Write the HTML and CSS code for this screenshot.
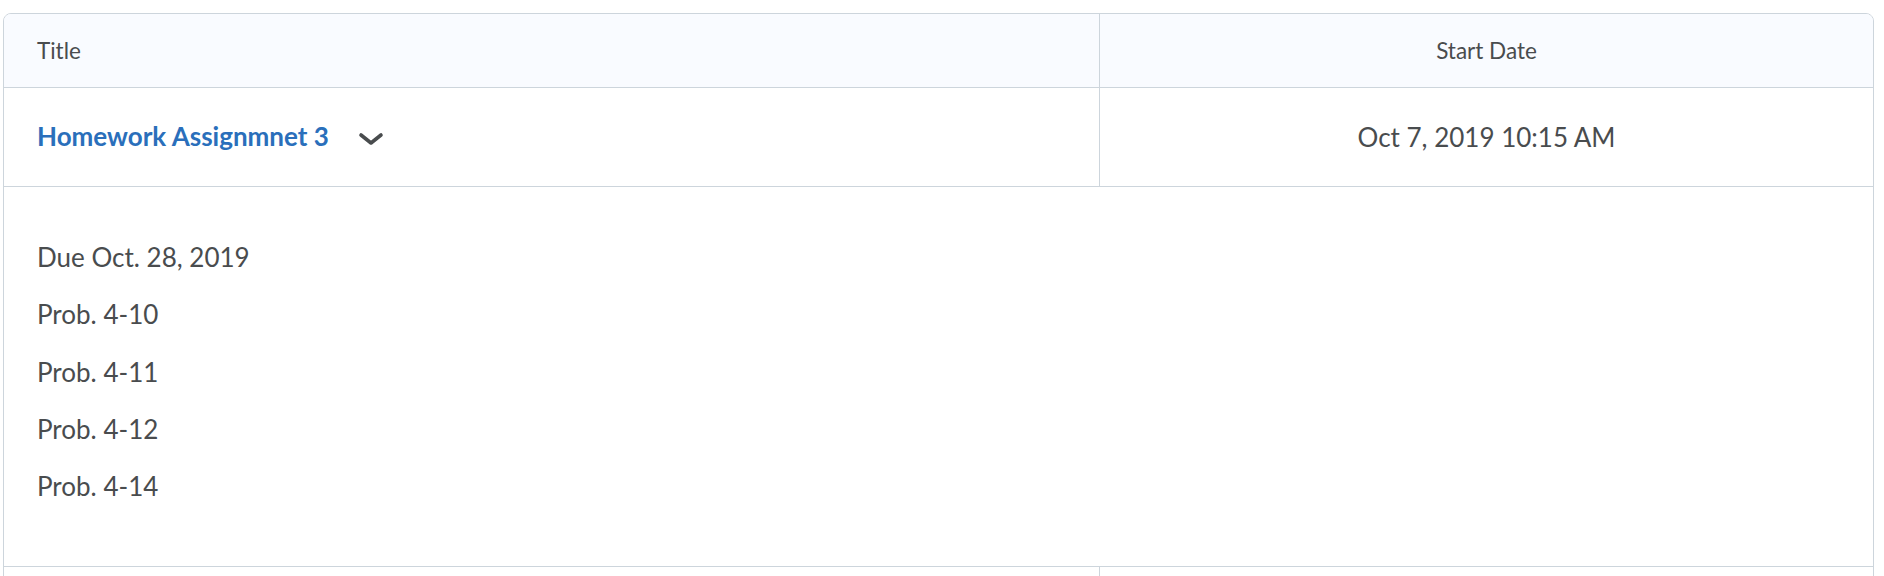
FILE: index.html
```html
<!DOCTYPE html>
<html lang="en">
<head>
<meta charset="utf-8">
<title>Assignments</title>
<link rel="stylesheet" href="styles.css">
</head>
<body>
<div class="page">
  <div class="table">
    <div class="cell head head-title">Title</div>
    <div class="cell head head-date">Start Date</div>

    <div class="cell row-title">
      <a class="link" href="#">Homework Assignmnet 3</a>
      <span class="chev">
        <svg width="26" height="14" viewBox="0 0 26 14" aria-hidden="true">
          <polyline points="3,3 13,11 23,3" fill="none" stroke="#494c4e" stroke-width="3.6" stroke-linecap="round" stroke-linejoin="round"/>
        </svg>
      </span>
    </div>
    <div class="cell row-date">Oct 7, 2019 10:15 AM</div>

    <div class="cell details">
      <p class="line">Due Oct. 28, 2019</p>
      <p class="line">Prob. 4-10</p>
      <p class="line">Prob. 4-11</p>
      <p class="line">Prob. 4-12</p>
      <p class="line">Prob. 4-14</p>
    </div>

    <div class="cell next-title"></div>
    <div class="cell next-date"></div>
  </div>
</div>
</body>
</html>
```

FILE: styles.css
```css
html, body {
  margin: 0;
  padding: 0;
  background: #ffffff;
}

body {
  font-family: Lato, "Open Sans", "Liberation Sans", sans-serif;
  color: #494c4e;
}

.page {
  padding: 13px 0 0 3px;
}

.table {
  width: 1871px;
  box-sizing: border-box;
  border: 1px solid #cdd5dc;
  border-radius: 8px;
  overflow: hidden;
  display: grid;
  grid-template-columns: 1096px 1fr;
}

.cell {
  box-sizing: border-box;
  border-bottom: 1px solid #cdd5dc;
  display: flex;
  align-items: center;
}

.head {
  height: 74px;
  background: #f9fbff;
  font-size: 22.5px;
}

.head-title {
  padding-left: 33px;
  border-right: 1px solid #cdd5dc;
}

.head-date {
  justify-content: center;
}

.row-title,
.row-date {
  height: 99px;
}

.row-title {
  padding-left: 33px;
  padding-bottom: 3px;
  border-right: 1px solid #cdd5dc;
}

.row-date {
  justify-content: center;
  font-size: 26px;
  padding-bottom: 1px;
}

.link {
  font-size: 26px;
  font-weight: 700;
  color: #2a6fbb;
  text-decoration: none;
}

.chev {
  display: flex;
  margin-left: 29px;
  margin-top: 6px;
}

.details {
  grid-column: 1 / span 2;
  height: 380px;
  flex-direction: column;
  align-items: flex-start;
  justify-content: flex-start;
  gap: 25.3px;
  padding: 54px 0 0 33px;
}

.line {
  margin: 0;
  font-size: 26px;
  line-height: 32px;
}

.next-title {
  height: 40px;
  border-right: 1px solid #cdd5dc;
  border-bottom: none;
}

.next-date {
  height: 40px;
  border-bottom: none;
}
```
